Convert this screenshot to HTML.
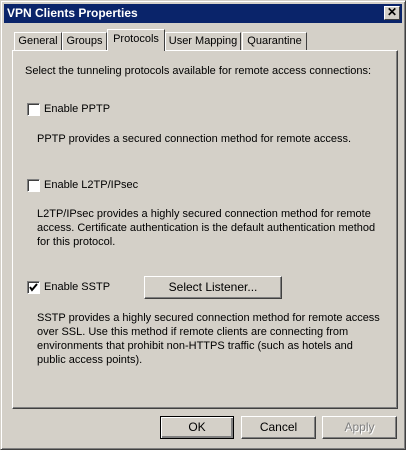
<!DOCTYPE html>
<html><head><meta charset="utf-8"><style>
*{box-sizing:border-box}
body{margin:0;width:406px;height:450px;background:#d4d0c8;font-family:"Liberation Sans",Tahoma,sans-serif;font-size:11px;color:#000;position:relative;overflow:hidden}
.win{position:absolute;left:0;top:0;width:406px;height:450px;border:1px solid #404040;border-top-color:#d4d0c8;border-left-color:#d4d0c8;box-shadow:inset 1px 1px 0 #fff,inset -1px -1px 0 #808080}
.title{position:absolute;left:4px;top:4px;width:398px;height:19px;background:#0a246a;color:#fff;font-weight:bold;font-size:12px;line-height:19px;padding-left:3px}
.close{position:absolute;right:6px;top:6px;width:16px;height:14px;background:#d4d0c8;border:1px solid;border-color:#fff #404040 #404040 #fff;font-size:12px;line-height:11px;text-align:center;font-weight:bold;color:#000}
.tab{position:absolute;top:32px;height:19px;border:1px solid;border-color:#fff #404040 transparent #fff;border-bottom:none;line-height:17px;text-align:center;font-size:11px;white-space:nowrap;overflow:visible}
.tab.act{top:29px;height:22px;background:#d4d0c8;z-index:2;line-height:19px}
.panel{position:absolute;left:12px;top:50px;width:386px;height:359px;border:1px solid;border-color:#fff #404040 #404040 #fff;box-shadow:inset -1px -1px 0 #808080}
.t{position:absolute;left:25px;line-height:14px;white-space:nowrap}
.cb{position:absolute;left:27px;width:13px;height:13px;background:#fff;border:1px solid;border-color:#808080 #fff #fff #808080;box-shadow:inset 1px 1px 0 #404040}
.btn{position:absolute;height:23px;border:1px solid;border-color:#fff #404040 #404040 #fff;box-shadow:inset -1px -1px 0 #808080;text-align:center;line-height:20px;font-size:12px;white-space:nowrap}
</style></head><body>
<div class="win"></div>
<div class="title">VPN Clients Properties</div>
<div class="close">✕</div>
<div class="tab" style="left:14px;width:48px">General</div>
<div class="tab" style="left:62px;width:45px">Groups</div>
<div class="tab act" style="left:107px;width:58px">Protocols</div>
<div class="tab" style="left:165px;width:76px">User Mapping</div>
<div class="tab" style="left:242px;width:65px">Quarantine</div>
<div class="panel"></div>
<div class="t" style="top:64px">Select the tunneling protocols available for remote access connections:</div>
<div class="cb" style="top:103px"></div><div class="t" style="left:44px;top:102px">Enable PPTP</div>
<div class="t" style="left:37px;top:132px">PPTP provides a secured connection method for remote access.</div>
<div class="cb" style="top:179px"></div><div class="t" style="left:44px;top:178px">Enable L2TP/IPsec</div>
<div class="t" style="left:37px;top:207px">L2TP/IPsec provides a highly secured connection method for remote<br>access. Certificate authentication is the default authentication method<br>for this protocol.</div>
<div class="cb" style="top:281px"><svg width="11" height="11" style="position:absolute;left:0;top:0"><path d="M2 5 L4 8 L9 2" stroke="#000" stroke-width="2" fill="none"/></svg></div>
<div class="t" style="left:44px;top:280px">Enable SSTP</div>
<div class="btn" style="left:144px;top:276px;width:138px">Select Listener...</div>
<div class="t" style="left:37px;top:311px">SSTP provides a highly secured connection method for remote access<br>over SSL. Use this method if remote clients are connecting from<br>environments that prohibit non-HTTPS traffic (such as hotels and<br>public access points).</div>
<div class="btn" style="left:160px;top:416px;width:74px;border-color:#000;box-shadow:inset 1px 1px 0 #fff,inset -2px -2px 0 #808080">OK</div>
<div class="btn" style="left:241px;top:416px;width:75px">Cancel</div>
<div class="btn" style="left:322px;top:416px;width:75px;color:#808080;text-shadow:1px 1px 0 #fff">Apply</div>
</body></html>
